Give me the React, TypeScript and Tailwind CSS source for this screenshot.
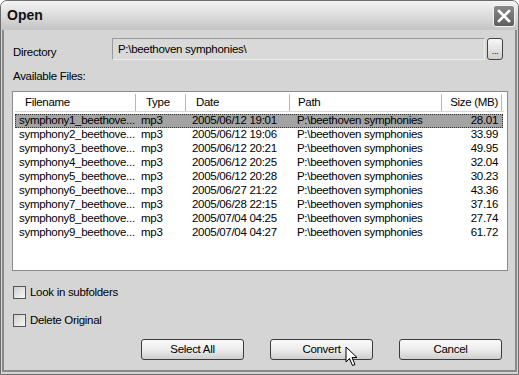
import React from 'react';

const files = [
  { name: 'symphony1_beethove...', date: '2005/06/12 19:01', size: '28.01' },
  { name: 'symphony2_beethove...', date: '2005/06/12 19:06', size: '33.99' },
  { name: 'symphony3_beethove...', date: '2005/06/12 20:21', size: '49.95' },
  { name: 'symphony4_beethove...', date: '2005/06/12 20:25', size: '32.04' },
  { name: 'symphony5_beethove...', date: '2005/06/12 20:28', size: '30.23' },
  { name: 'symphony6_beethove...', date: '2005/06/27 21:22', size: '43.36' },
  { name: 'symphony7_beethove...', date: '2005/06/28 22:15', size: '37.16' },
  { name: 'symphony8_beethove...', date: '2005/07/04 04:25', size: '27.74' },
  { name: 'symphony9_beethove...', date: '2005/07/04 04:27', size: '61.72' },
];

const Button = ({ label, children }: { label: string; children?: React.ReactNode }) => (
  <div className="relative flex h-[21px] w-[103px] items-center justify-center rounded-[3px] border border-[#3c3c3c] bg-gradient-to-b from-[#fafafa] via-[#ececec] to-[#cfcfcf] text-black">
    {label}
    {children}
  </div>
);

const Checkbox = ({ label }: { label: string }) => (
  <div className="flex items-center gap-[4px]">
    <div className="h-[13px] w-[13px] border border-[#555] bg-gradient-to-br from-[#cfcfcf] to-[#f7f7f7]" />
    <span>{label}</span>
  </div>
);

export default function App() {
  return (
    <div
      className="h-[375px] w-[519px] overflow-hidden bg-white text-[11.5px] tracking-[-0.3px] text-black"
      style={{ fontFamily: '"Liberation Sans", Arial, sans-serif' }}
    >
      <div className="flex h-[375px] flex-col rounded-t-[7px] border border-[#6d6d6d] bg-[#d5d5d5]">
        {/* title bar */}
        <div className="flex h-[29px] items-center justify-between rounded-t-[6px] bg-gradient-to-b from-[#f4f4f4] via-[#dcdcdc] to-[#c4c4c4] pl-[6px] pr-[3px]">
          <span className="text-[14px] font-bold tracking-normal text-[#111]">Open</span>
          <div className="flex h-[22px] w-[22px] items-center justify-center rounded-[3px] border border-[#f2f2f2] bg-gradient-to-b from-[#8a8a8a] to-[#5e5e5e]">
            <svg width="14" height="14" viewBox="0 0 14 14">
              <path d="M2 2 L12 12 M12 2 L2 12" stroke="white" strokeWidth="2.6" strokeLinecap="square" />
            </svg>
          </div>
        </div>

        {/* body */}
        <div className="mx-[1px] mb-[2px] flex flex-1 flex-col border-x-2 border-b-2 border-[#8a8a8a] px-[7px] pt-[7px]">
          <div className="flex items-center">
            <span className="w-[101px] pl-[2px] pt-[7px]">Directory</span>
            <div className="flex h-[22px] w-[373px] items-start border border-[#9a9a9a] border-b-[#ececec] border-r-[#ececec] bg-[#d9d9d9] pl-[5px] pt-[2px]">
              P:\beethoven symphonies\
            </div>
            <div className="ml-[2px] flex h-[22px] w-[16px] items-end justify-center rounded-[3px] border border-[#444] bg-gradient-to-b from-[#f8f8f8] to-[#cfcfcf] pb-[3px] text-[9px] leading-none">
              ...
            </div>
          </div>

          <div className="mt-[7px] pl-[2px]">Available Files:</div>

          <div className="mt-[5px] ml-[1px] h-[180px] w-[496px] border border-[#8c8c8c] bg-white p-[2px]">
            <div className="flex h-[18px] w-[489px] items-center border-b border-[#d8d8d8] bg-white pt-[1px]">
              <div className="w-[121px] border-r border-[#b8b8b8] pl-[10px]">Filename</div>
              <div className="w-[50px] border-r border-[#b8b8b8] pl-[10px]">Type</div>
              <div className="w-[104px] border-r border-[#b8b8b8] pl-[10px]">Date</div>
              <div className="w-[152px] border-r border-[#b8b8b8] pl-[8px]">Path</div>
              <div className="w-[60px] border-r border-[#b8b8b8] pr-[3px] text-right">Size (MB)</div>
            </div>
            <div className="mt-[2px]">
              {files.map((f, i) => (
                <div
                  key={f.name}
                  className={
                    i === 0
                      ? 'flex h-[14px] w-[488px] items-center border border-dotted border-[#333] bg-[#a3a3a3] leading-none'
                      : 'flex h-[14px] w-[488px] items-center border border-transparent leading-none'
                  }
                >
                  <div className="w-[122px] pl-[3px]">{f.name}</div>
                  <div className="w-[50px] pl-[3px]">mp3</div>
                  <div className="w-[104px] pl-[4px]">{f.date}</div>
                  <div className="w-[152px] pl-[5px]">P:\beethoven symphonies</div>
                  <div className="w-[58px] pr-[4px] text-right">{f.size}</div>
                </div>
              ))}
            </div>
          </div>

          <div className="mt-[13px] ml-[2px]">
            <Checkbox label="Look in subfolders" />
          </div>
          <div className="mt-[11px] ml-[2px]">
            <Checkbox label="Delete Original" />
          </div>

          <div className="mt-[10px] flex justify-end gap-[26px] pr-[6px]">
            <Button label="Select All" />
            <Button label="Convert">
              <svg className="absolute left-[74px] top-[6px]" width="14" height="21" viewBox="0 0 14 21">
                <path
                  d="M1 1 L1 16 L4.5 12.5 L7.5 19.5 L10 18.5 L7 11.5 L12 11.5 Z"
                  fill="white"
                  stroke="black"
                  strokeWidth="1"
                  strokeLinejoin="miter"
                />
              </svg>
            </Button>
            <Button label="Cancel" />
          </div>
        </div>
      </div>
    </div>
  );
}
